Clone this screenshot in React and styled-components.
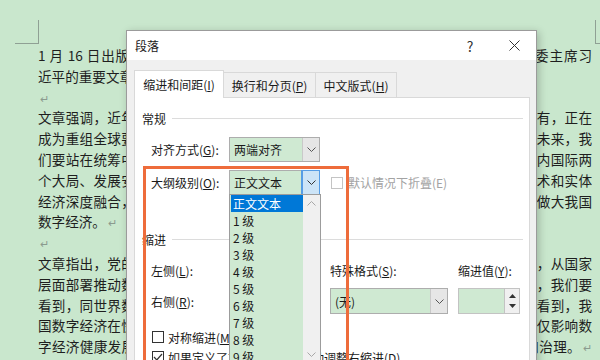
import styled, { createGlobalStyle } from "styled-components";

const CJK = `"Noto Sans CJK SC", "Noto Sans", sans-serif`;

const GlobalStyle = createGlobalStyle`
  html, body { margin: 0; padding: 0; }
  body { background: #c9e7cd; overflow: hidden; }
`;

const Page = styled.div`
  position: relative;
  width: 600px;
  height: 360px;
  overflow: hidden;
  box-sizing: border-box;
  padding: 45px 8px 0 38px;
  background: #c9e7cd;
  font-family: ${CJK};
  color: #1e1e1e;
`;

const Corner = styled.span`
  position: absolute;
  top: 20px;
  height: 23px;
  border-bottom: 1px solid #8fa094;
  ${p => p.$right
    ? "left: 595px; width: 10px; border-left: 1px solid #8fa094;"
    : "left: 15px; width: 23px; border-right: 1px solid #8fa094;"}
`;

const Line = styled.div`
  height: 20.8px;
  line-height: 20.8px;
  font-size: 13.6px;
  overflow: hidden;
  text-align: ${p => (p.$full ? "justify" : "left")};
  text-align-last: ${p => (p.$full ? "justify" : "left")};
`;

const Return = styled.span`
  color: #8a9a8e;
  font-size: 11px;
  margin-left: 2px;
`;

const Dialog = styled.div`
  position: absolute;
  left: 126px;
  top: 30px;
  width: 411px;
  height: 345px;
  box-sizing: border-box;
  display: flex;
  flex-direction: column;
  background: #f0f0f0;
  border: 1px solid #9b9b9b;
  box-shadow: 2px 2px 8px rgba(0, 0, 0, 0.22);
  font-family: ${CJK};
  font-size: 12px;
  color: #1a1a1a;
`;

const TitleBar = styled.div`
  height: 29px;
  display: flex;
  align-items: center;
  padding: 0 7px 0 8px;
  background: #fff;
`;

const Title = styled.div`
  flex: 1;
  font-size: 12px;
`;

const TitleBtn = styled.div`
  width: 30px;
  height: 29px;
  display: flex;
  align-items: center;
  justify-content: center;
  margin-left: ${p => p.$gap || 0}px;
  font-size: 14px;
  color: #333;
`;

const Body = styled.div`
  flex: 1;
  display: flex;
  flex-direction: column;
  padding: 10px 6px 0 7px;
`;

const TabRow = styled.div`
  display: flex;
  align-items: flex-end;
  height: 27px;
`;

const Tab = styled.div`
  width: ${p => p.$w}px;
  height: ${p => (p.$active ? 28 : 25)}px;
  box-sizing: border-box;
  display: flex;
  align-items: center;
  justify-content: center;
  border: 1px solid #d9d9d9;
  border-bottom: none;
  margin-left: ${p => (p.$first ? 0 : -1)}px;
  margin-bottom: ${p => (p.$active ? -1 : 0)}px;
  background: ${p => (p.$active ? "#fff" : "#f0f0f0")};
  position: relative;
  z-index: ${p => (p.$active ? 1 : 0)};
`;

const Panel = styled.div`
  flex: 1;
  width: 396px;
  box-sizing: border-box;
  position: relative;
  background: #fff;
  border: 1px solid #d9d9d9;
`;

const SectionHead = styled.div`
  display: flex;
  align-items: center;
  gap: 6px;
  height: 16px;
  padding: 0 6px 0 7px;
  margin-top: ${p => p.$mt}px;
  &::after {
    content: "";
    flex: 1;
    height: 1px;
    background: #dcdcdc;
  }
`;

const FieldRow = styled.div`
  display: flex;
  align-items: center;
  height: 25px;
  padding-left: ${p => (p.$flush ? 0 : 16)}px;
  margin-top: ${p => p.$mt || 0}px;
`;

const Label = styled.div`
  width: ${p => p.$w || 78}px;
  flex-shrink: 0;
  white-space: nowrap;
  color: ${p => (p.$muted ? "#a3a3a3" : "inherit")};
`;

const SelectBox = styled.div`
  position: relative;
  width: ${p => p.$w}px;
  height: ${p => p.$h || 25}px;
  box-sizing: border-box;
  display: flex;
  background: #cfe9d2;
  border: 1px solid #adadad;
`;

const SelectText = styled.div`
  flex: 1;
  display: flex;
  align-items: center;
  padding-left: 4px;
`;

const ArrowBox = styled.div`
  width: 16px;
  display: flex;
  align-items: center;
  justify-content: center;
  background: ${p => (p.$active ? "#cce4f7" : "#e6e6e6")};
  border-left: 1px solid ${p => (p.$active ? "#569de5" : "#c9c9c9")};
  ${p => p.$active && "outline: 1px solid #569de5;"}
`;

const Check = styled.div`
  width: 12px;
  height: 12px;
  box-sizing: border-box;
  flex-shrink: 0;
  display: flex;
  align-items: center;
  justify-content: center;
  background: #fff;
  border: 1px solid ${p => (p.$muted ? "#c4c4c4" : "#333")};
  margin: 0 ${p => p.$gap || 4}px 0 ${p => p.$ml || 0}px;
`;

const DropList = styled.div`
  position: absolute;
  top: 100%;
  left: -1px;
  width: 92px;
  height: 170px;
  box-sizing: border-box;
  display: flex;
  background: #cfe9d2;
  border: 1px solid #9c9c9c;
  z-index: 3;
`;

const Items = styled.div`
  flex: 1;
  overflow: hidden;
  padding-left: 1px;
`;

const Item = styled.div`
  height: 17px;
  line-height: 17px;
  padding-left: 2px;
  white-space: nowrap;
  background: ${p => (p.$selected ? "#0078d7" : "transparent")};
  color: ${p => (p.$selected ? "#fff" : "#1a1a1a")};
`;

const ScrollBar = styled.div`
  width: 17px;
  display: flex;
  flex-direction: column;
  justify-content: space-between;
  background: #f0f0f0;
`;

const ScrollArrow = styled.div`
  height: 17px;
  display: flex;
  align-items: center;
  justify-content: center;
`;

const IndentGrid = styled.div`
  display: grid;
  grid-template-columns: 179px 128px 1fr;
  grid-template-rows: 26px 26px;
  row-gap: 5px;
  align-items: center;
  padding-left: 16px;
  margin-top: 10px;
`;

const Spin = styled.div`
  width: ${p => p.$w}px;
  height: 26px;
  box-sizing: border-box;
  display: flex;
  background: #f0f0f0;
  border: 1px solid #c3c3c3;
`;

const SpinField = styled.div`
  flex: 1;
  background: #cfe9d2;
  border-right: 1px solid #c3c3c3;
`;

const SpinBtns = styled.div`
  width: 14px;
  display: flex;
  flex-direction: column;
  justify-content: space-around;
  align-items: center;
  padding: 2px 0;
`;

const CheckRow = styled.div`
  display: flex;
  align-items: center;
  height: 20px;
  padding-left: 17px;
  white-space: nowrap;
  margin-top: ${p => p.$mt || 0}px;
`;

const Highlight = styled.div`
  position: absolute;
  left: 16px;
  top: 135px;
  width: 206px;
  height: 240px;
  box-sizing: border-box;
  border: 3.5px solid #ee6c3b;
  z-index: 5;
  pointer-events: none;
`;

const Chevron = ({ up, color = "#555" }) => (
  <svg width="9" height="5" viewBox="0 0 9 5">
    <path
      d={up ? "M0.5 4.5 L4.5 0.5 L8.5 4.5" : "M0.5 0.5 L4.5 4.5 L8.5 0.5"}
      fill="none"
      stroke={color}
      strokeWidth="1"
    />
  </svg>
);

const Triangle = ({ up }) => (
  <svg width="7" height="4" viewBox="0 0 7 4">
    <path d={up ? "M0 4 L3.5 0 L7 4 Z" : "M0 0 L3.5 4 L7 0 Z"} fill="#333" />
  </svg>
);

const Key = ({ k }) => (
  <>
    (<u>{k}</u>)
  </>
);

const lines = [
  { t: "1 月 16 日出版的第 2 期《求是》杂志发表中共中央总书记、国家主席、中央军委主席习", full: true },
  { t: "近平的重要文章《不断做强做优做大我国数字经济》。", end: true },
  { t: "", end: true },
  { t: "文章强调，近年来，数字经济发展速度之快、辐射范围之广、影响程度之深前所未有，正在", full: true },
  { t: "成为重组全球要素资源、重塑全球经济结构、改变全球竞争格局的关键力量。面向未来，我", full: true },
  { t: "们要站在统筹中华民族伟大复兴战略全局和世界百年未有之大变局的高度，统筹国内国际两", full: true },
  { t: "个大局、发展安全两件大事，充分发挥海量数据和丰富应用场景优势，促进数字技术和实体", full: true },
  { t: "经济深度融合，赋能传统产业转型升级，催生新产业新业态新模式，不断做强做优做大我国", full: true },
  { t: "数字经济。", end: true },
  { t: "", end: true },
  { t: "文章指出，党的十八大以来，党中央高度重视发展数字经济，将其上升为国家战略，从国家", full: true },
  { t: "层面部署推动数字经济发展，我国数字经济发展较快、成就显著、规模壮大。同时，我们要", full: true },
  { t: "看到，同世界数字经济大国、强国相比，我国数字经济大而不强、快而不优。还要看到，我", full: true },
  { t: "国数字经济在快速发展中也出现了一些不健康、不规范的苗头和趋势，这些问题不仅影响数", full: true },
  { t: "字经济健康发展，违反法律法规、对国家经济金融安全构成威胁，必须坚决纠正和治理。", full: true, end: true },
];

const levels = ["正文文本", "1 级", "2 级", "3 级", "4 级", "5 级", "6 级", "7 级", "8 级", "9 级"];

export default function App() {
  return (
    <Page>
      <GlobalStyle />
      <Corner />
      <Corner $right />
      {lines.map((l, i) => (
        <Line key={i} $full={l.full}>
          {l.t}
          {l.end && <Return>↵</Return>}
        </Line>
      ))}

      <Dialog>
        <TitleBar>
          <Title>段落</Title>
          <TitleBtn>?</TitleBtn>
          <TitleBtn $gap={14}>
            <svg width="11" height="11" viewBox="0 0 11 11">
              <path d="M0.5 0.5 L10.5 10.5 M10.5 0.5 L0.5 10.5" stroke="#333" strokeWidth="1" />
            </svg>
          </TitleBtn>
        </TitleBar>
        <Body>
          <TabRow>
            <Tab $w={90} $active $first>缩进和间距<Key k="I" /></Tab>
            <Tab $w={93}>换行和分页<Key k="P" /></Tab>
            <Tab $w={82}>中文版式<Key k="H" /></Tab>
          </TabRow>
          <Panel>
            <SectionHead $mt={12}>常规</SectionHead>
            <FieldRow $mt={11}>
              <Label>对齐方式<Key k="G" />:</Label>
              <SelectBox $w={91}>
                <SelectText>两端对齐</SelectText>
                <ArrowBox><Chevron /></ArrowBox>
              </SelectBox>
            </FieldRow>
            <FieldRow $mt={8}>
              <Label>大纲级别<Key k="O" />:</Label>
              <SelectBox $w={91}>
                <SelectText>正文文本</SelectText>
                <ArrowBox $active><Chevron color="#333" /></ArrowBox>
                <DropList>
                  <Items>
                    {levels.map((lv, i) => (
                      <Item key={lv} $selected={i === 0}>{lv}</Item>
                    ))}
                  </Items>
                  <ScrollBar>
                    <ScrollArrow><Chevron up color="#a8a8a8" /></ScrollArrow>
                    <ScrollArrow><Chevron color="#a8a8a8" /></ScrollArrow>
                  </ScrollBar>
                </DropList>
              </SelectBox>
              <Check $muted $ml={11} $gap={5} />
              <Label $muted>默认情况下折叠(E)</Label>
            </FieldRow>

            <SectionHead $mt={36}>缩进</SectionHead>
            <IndentGrid>
              <FieldRow $flush>
                <Label>左侧<Key k="L" />:</Label>
                <Spin $w={80}>
                  <SpinField />
                  <SpinBtns><Triangle up /><Triangle /></SpinBtns>
                </Spin>
              </FieldRow>
              <Label>特殊格式<Key k="S" />:</Label>
              <Label>缩进值<Key k="Y" />:</Label>
              <FieldRow $flush>
                <Label>右侧<Key k="R" />:</Label>
                <Spin $w={80}>
                  <SpinField />
                  <SpinBtns><Triangle up /><Triangle /></SpinBtns>
                </Spin>
              </FieldRow>
              <SelectBox $w={118} $h={26}>
                <SelectText>(无)</SelectText>
                <ArrowBox><Chevron /></ArrowBox>
              </SelectBox>
              <Spin $w={62}>
                <SpinField />
                <SpinBtns><Triangle up /><Triangle /></SpinBtns>
              </Spin>
            </IndentGrid>

            <CheckRow $mt={13}>
              <Check />
              对称缩进<Key k="M" />
            </CheckRow>
            <CheckRow>
              <Check>
                <svg width="10" height="8" viewBox="0 0 10 8">
                  <path d="M1 4 L3.8 7 L9 1" fill="none" stroke="#333" strokeWidth="1.2" />
                </svg>
              </Check>
              如果定义了文档网格，则自动调整右缩进<Key k="D" />
            </CheckRow>
          </Panel>
        </Body>
        <Highlight />
      </Dialog>
    </Page>
  );
}
